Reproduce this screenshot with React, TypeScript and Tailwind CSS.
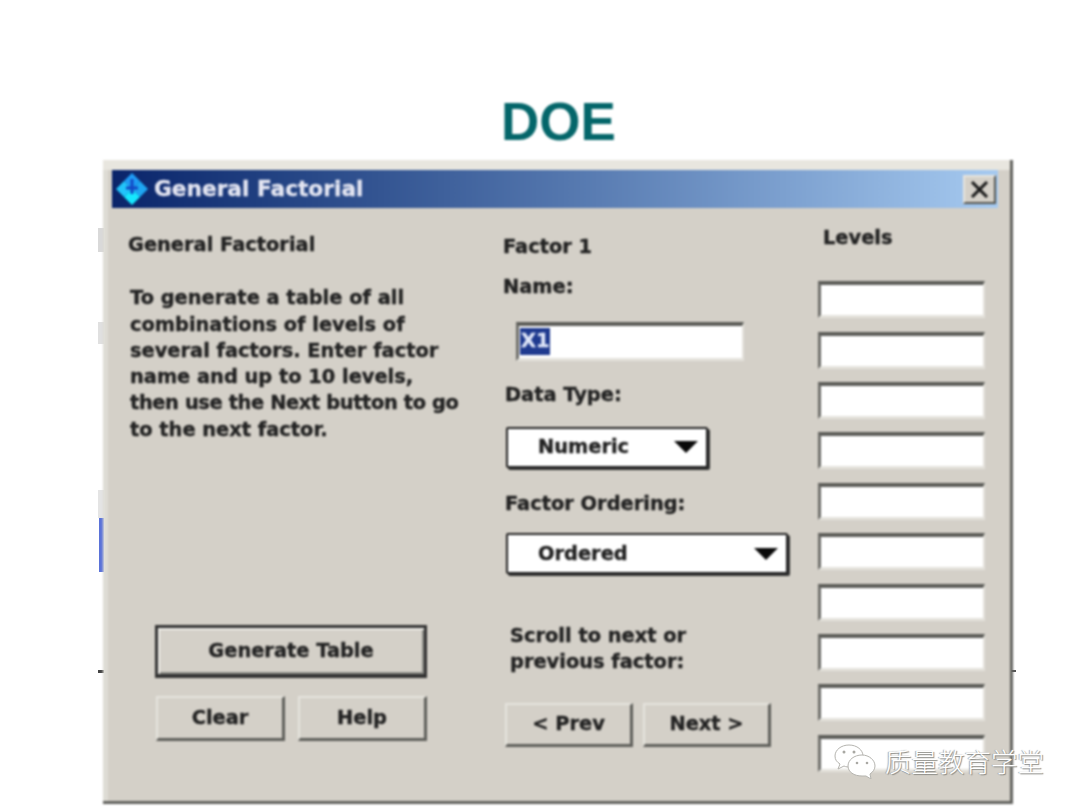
const levelSlots = Array.from({ length: 10 }, (_, i) => i);

const sans = "font-['DejaVu_Sans',sans-serif] font-bold text-[#222] text-[19.4px] leading-[26.3px] [-webkit-text-stroke:0.35px_#222] whitespace-nowrap";

function AppIcon() {
  return (
    <svg width="34" height="34" viewBox="0 0 34 34" className="shrink-0">
      <path d="M17 1 L25 9 L17 17 L9 9 Z" fill="#1f9cf5" />
      <path d="M9 9 L17 17 L9 25 L1 17 Z" fill="#22c4fb" />
      <path d="M25 9 L33 17 L25 25 L17 17 Z" fill="#1ea6f2" />
      <path d="M17 17 L25 25 L17 33 L9 25 Z" fill="#16e8ff" />
      <path d="M17 7 L17 22 M11 16 L23 16" stroke="#1348c4" strokeWidth="3" />
    </svg>
  );
}

function Arrow() {
  return (
    <svg width="26" height="14" viewBox="0 0 26 14">
      <path d="M1 1 H25 L13 13 Z" fill="#0a0a0a" />
    </svg>
  );
}

function Raised({ label, className }: { label: string; className: string }) {
  return (
    <div
      className={`flex items-center justify-center bg-[#d4d0c8] border-t-2 border-l-2 border-r-[3px] border-b-[3px] border-t-[#e6e4de] border-l-[#e6e4de] border-r-[#5f5f5b] border-b-[#5f5f5b] ${sans} ${className}`}
    >
      {label}
    </div>
  );
}

function Dropdown({ label, className }: { label: string; className: string }) {
  return (
    <div
      className={`flex items-center justify-between bg-white pl-[30px] pr-[7px] border-2 border-[#222] rounded-[2px] shadow-[2px_2px_0_#333] ${sans} ${className}`}
    >
      <span>{label}</span>
      <Arrow />
    </div>
  );
}

function Sunken({ className, children }: { className: string; children?: React.ReactNode }) {
  return (
    <div
      className={`bg-white border-t-[4px] border-l-[3px] border-r-2 border-b-[3px] border-t-[#5c5c58] border-l-[#6e6e6a] border-r-[#e4e2dc] border-b-[#e4e2dc] ${className}`}
    >
      {children}
    </div>
  );
}

function WeChatMark() {
  return (
    <svg width="42" height="36" viewBox="0 0 42 36">
      <path
        d="M15 2 C7 2 1 7 1 13 C1 17 3 19 6 21 L4 26 L10 23 C12 24 14 24 16 24 C23 24 29 19 29 13 C29 7 23 2 15 2 Z"
        fill="#ffffff"
        stroke="#b5b4af"
        strokeWidth="1"
      />
      <path
        d="M28 12 C20 12 14 17 14 23 C14 29 20 33 28 33 C29 33 31 33 32 33 L37 36 L36 31 C39 29 41 26 41 23 C41 17 35 12 28 12 Z"
        fill="#ffffff"
        stroke="#b5b4af"
        strokeWidth="1"
      />
      <circle cx="10" cy="9" r="1.5" fill="#a9a8a3" />
      <circle cx="20" cy="9" r="1.5" fill="#a9a8a3" />
      <circle cx="23" cy="20" r="1.3" fill="#a9a8a3" />
      <circle cx="33" cy="20" r="1.3" fill="#a9a8a3" />
    </svg>
  );
}

export default function App() {
  return (
    <div className="relative w-[1080px] h-[810px] overflow-hidden bg-white pl-[103px]">
      {/* bits of the slide behind the dialog */}
      <div className="absolute left-[98px] top-[228px] w-[6px] h-[24px] bg-[#d9d9d9]" />
      <div className="absolute left-[98px] top-[322px] w-[6px] h-[22px] bg-[#e0e0e0]" />
      <div className="absolute left-[98px] top-[490px] w-[6px] h-[28px] bg-[#e4e4e4]" />
      <div className="absolute left-[99px] top-[518px] w-[5px] h-[54px] bg-[#5a72d8]" />
      <div className="absolute left-[98px] top-[670px] w-[6px] h-[3px] bg-[#444]" />
      <div className="absolute left-[1008px] top-[670px] w-[8px] h-[2px] bg-[#555]" />

      <div className="w-[907px] blur-[0.8px]">
        <h1 className="text-center pl-[4px] font-['Liberation_Sans',sans-serif] font-bold text-[53px] leading-[60px] text-[#04666a] pt-[92px] pb-[8px]">
          DOE
        </h1>

        <div className="h-[644px] flex flex-col pl-[9px] pr-[12px] bg-[#d4d0c8] border-b-[3px] border-b-[#62625e] shadow-[3px_0_0_#62625e,inset_5px_0_0_#dedcd5]">
          <div className="h-[10px] shrink-0 -ml-[9px] -mr-[12px] bg-[#e8e6df]" />
          <div className="h-[38px] shrink-0 flex items-center pl-[3px] pr-[2px] bg-gradient-to-r from-[#0a246a] to-[#a6caf0]">
            <AppIcon />
            <span className="ml-[5px] font-['DejaVu_Sans',sans-serif] font-bold text-[21.7px] text-[#e4e6f2] [-webkit-text-stroke:0.3px_#e4e6f2]">
              General Factorial
            </span>
            <div className="ml-auto w-[33px] h-[29px] flex items-center justify-center bg-[#d4d0c8] border-t-2 border-l-2 border-r-2 border-b-2 border-t-[#e6e4de] border-l-[#e6e4de] border-r-[#55554f] border-b-[#55554f]">
              <svg width="19" height="17" viewBox="0 0 19 17">
                <path d="M2 1 L17 16 M17 1 L2 16" stroke="#1a1a1a" strokeWidth="3" />
              </svg>
            </div>
          </div>

          <div className="flex pl-[16px]">
            {/* left column */}
            <div className="w-[375px] pt-[24px]">
              <div className={sans}>General Factorial</div>
              <p className={`mt-[27px] ml-[2px] ${sans}`}>
                To generate a table of all
                <br />
                combinations of levels of
                <br />
                several factors. Enter factor
                <br />
                name and up to 10 levels,
                <br />
                <span className="tracking-[-0.37px]">then use the Next button to go</span>
                <br />
                to the next factor.
              </p>
              <div
                className={`mt-[182px] ml-[27px] w-[272px] h-[53px] flex items-center justify-center bg-[#d4d0c8] border-[3px] border-[#333] border-b-[4px] shadow-[inset_2px_2px_0_#efeee9,inset_-2px_-2px_0_#8a8a85] ${sans}`}
              >
                Generate Table
              </div>
              <div className="mt-[18px] ml-[28px] flex gap-[13px]">
                <Raised label="Clear" className="w-[129px] h-[45px]" />
                <Raised label="Help" className="w-[129px] h-[45px]" />
              </div>
            </div>

            {/* middle column */}
            <div className="w-[315px] pt-[26px]">
              <div className={sans}>Factor 1</div>
              <div className={`mt-[14px] ${sans}`}>Name:</div>
              <Sunken className="mt-[21px] ml-[13px] w-[228px] h-[39px] flex items-center pl-px">
                <span className={`bg-[#1f3a8f] px-px !text-[#dfe6f8] [-webkit-text-stroke:0.35px_#dfe6f8] ${sans}`}>X1</span>
              </Sunken>
              <div className={`mt-[21px] ml-[2px] ${sans}`}>Data Type:</div>
              <Dropdown label="Numeric" className="mt-[19px] ml-[3px] w-[202px] h-[41px]" />
              <div className={`mt-[23px] ml-[2px] ${sans}`}>Factor Ordering:</div>
              <Dropdown label="Ordered" className="mt-[16px] ml-[3px] w-[282px] h-[41px]" />
              <p className={`mt-[49px] ml-[7px] ${sans}`}>
                Scroll to next or
                <br />
                previous factor:
              </p>
              <div className="mt-[27px] ml-[2px] flex gap-[10px]">
                <Raised label="< Prev" className="w-[128px] h-[44px]" />
                <Raised label="Next >" className="w-[128px] h-[44px]" />
              </div>
            </div>

            {/* levels column */}
            <div className="w-[167px] pt-[17px]">
              <div className={`ml-[5px] ${sans}`}>Levels</div>
              <div className="mt-[30px] flex flex-col gap-[13.4px]">
                {levelSlots.map((slot) => (
                  <Sunken key={slot} className="h-[37px]" />
                ))}
              </div>
            </div>
          </div>
        </div>
      </div>

      {/* watermark */}
      <div className="absolute left-[834px] top-[743px] flex items-center gap-[9px]">
        <WeChatMark />
        <span className="font-['Noto_Sans_CJK_SC',sans-serif] font-light text-[26.5px] leading-[36px] text-white [text-shadow:1px_1px_1px_#8a8a85,-1px_0_1px_#a5a5a0]">
          质量教育学堂
        </span>
      </div>
    </div>
  );
}
